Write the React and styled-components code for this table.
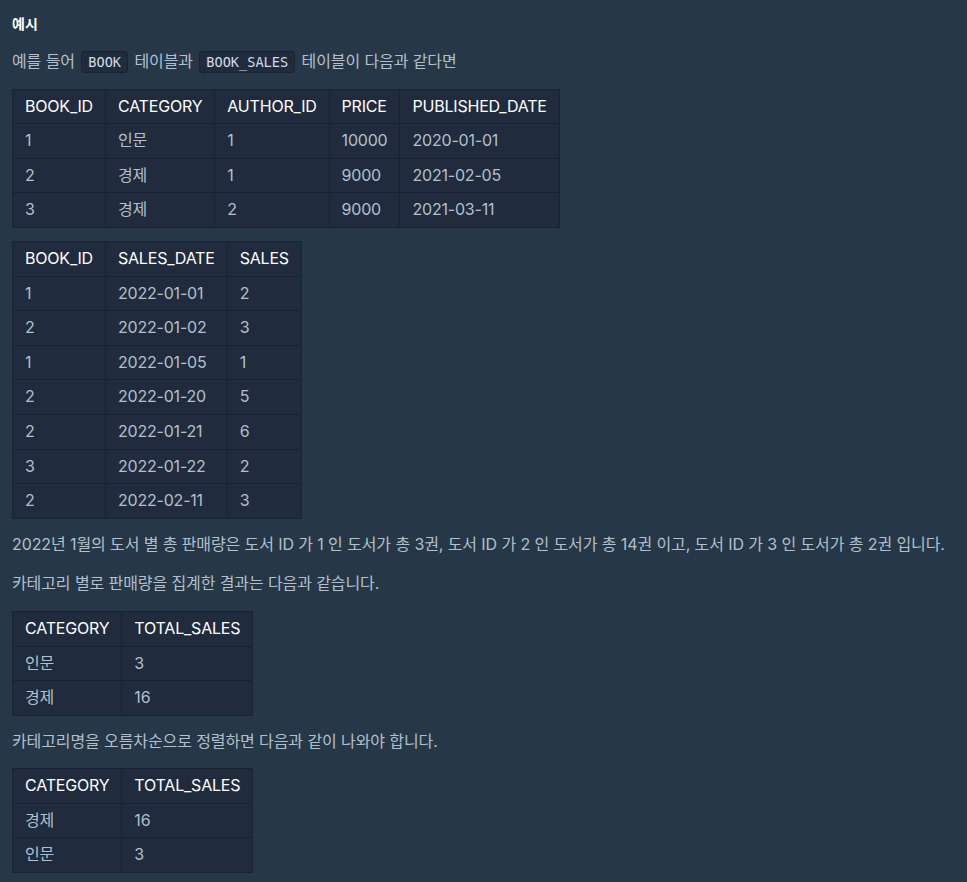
import styled, { createGlobalStyle } from "styled-components";

const GlobalStyle = createGlobalStyle`
  html, body {
    margin: 0;
    padding: 0;
    background: #263747;
  }
  body {
    font-family: Inter, "Noto Sans CJK KR", sans-serif;
    -webkit-font-smoothing: antialiased;
  }
`;

const Page = styled.div`
  padding: 13px 12px 8px;
  color: #b2c0cc;
  font-size: 16px;
  line-height: 1.6;
  min-height: 882px;
  box-sizing: border-box;
`;

const Heading = styled.h5`
  margin: 0 0 14px;
  font-size: 14px;
  line-height: 22px;
  font-weight: 700;
  color: #ffffff;
`;

const Para = styled.p`
  margin: 0 0 14px;
  letter-spacing: -0.1px;
`;

const Code = styled.code`
  font-family: "DejaVu Sans Mono", "Liberation Mono", monospace;
  font-size: 13.6px;
  letter-spacing: 0;
  color: #d1dce6;
  background: #202b3d;
  border: 1px solid #172334;
  border-radius: 4px;
  padding: 2px 6px;
  margin: 0 2px;
`;

const Table = styled.table`
  border-collapse: collapse;
  background: #202b3d;
  margin: 0 0 13px;
  border: 1px solid #172334;
  letter-spacing: -0.2px;
`;

const Th = styled.th`
  text-align: left;
  font-weight: 400;
  color: #ffffff;
  padding: 4px 12px;
  line-height: 25.6px;
  border: 1px solid #172334;
  white-space: nowrap;
`;

const Td = styled.td`
  padding: 4px 12px;
  line-height: 25.6px;
  border: 1px solid #172334;
  white-space: nowrap;
`;

function DataTable({ head, rows }) {
  return (
    <Table>
      <thead>
        <tr>
          {head.map((h) => (
            <Th key={h}>{h}</Th>
          ))}
        </tr>
      </thead>
      <tbody>
        {rows.map((r, i) => (
          <tr key={i}>
            {r.map((c, j) => (
              <Td key={j}>{c}</Td>
            ))}
          </tr>
        ))}
      </tbody>
    </Table>
  );
}

const book = [
  ["1", "인문", "1", "10000", "2020-01-01"],
  ["2", "경제", "1", "9000", "2021-02-05"],
  ["3", "경제", "2", "9000", "2021-03-11"],
];

const sales = [
  ["1", "2022-01-01", "2"],
  ["2", "2022-01-02", "3"],
  ["1", "2022-01-05", "1"],
  ["2", "2022-01-20", "5"],
  ["2", "2022-01-21", "6"],
  ["3", "2022-01-22", "2"],
  ["2", "2022-02-11", "3"],
];

export default function App() {
  return (
    <>
      <GlobalStyle />
      <Page>
        <Heading>예시</Heading>
        <Para>
          예를 들어 <Code>BOOK</Code> 테이블과 <Code>BOOK_SALES</Code> 테이블이 다음과 같다면
        </Para>
        <DataTable
          head={["BOOK_ID", "CATEGORY", "AUTHOR_ID", "PRICE", "PUBLISHED_DATE"]}
          rows={book}
        />
        <DataTable head={["BOOK_ID", "SALES_DATE", "SALES"]} rows={sales} />
        <Para>
          2022년 1월의 도서 별 총 판매량은 도서 ID 가 1 인 도서가 총 3권, 도서 ID 가 2 인 도서가 총 14권 이고, 도서 ID 가 3 인 도서가 총 2권 입니다.
        </Para>
        <Para>카테고리 별로 판매량을 집계한 결과는 다음과 같습니다.</Para>
        <DataTable
          head={["CATEGORY", "TOTAL_SALES"]}
          rows={[
            ["인문", "3"],
            ["경제", "16"],
          ]}
        />
        <Para>카테고리명을 오름차순으로 정렬하면 다음과 같이 나와야 합니다.</Para>
        <DataTable
          head={["CATEGORY", "TOTAL_SALES"]}
          rows={[
            ["경제", "16"],
            ["인문", "3"],
          ]}
        />
      </Page>
    </>
  );
}
